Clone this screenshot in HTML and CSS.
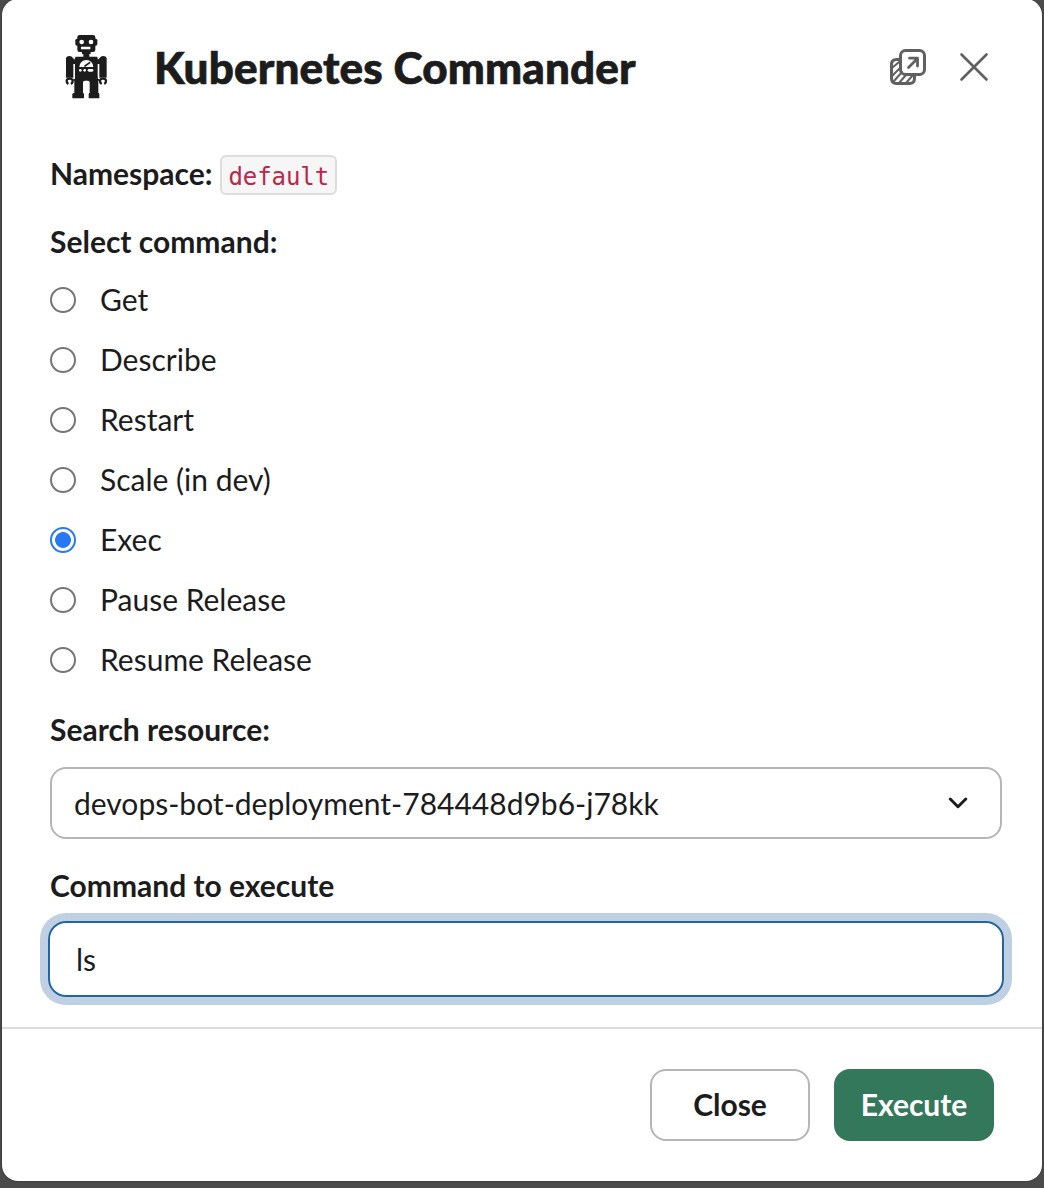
FILE: index.html
```html
<!DOCTYPE html>
<html lang="en">
<head>
<meta charset="utf-8">
<title>Kubernetes Commander</title>
<link rel="stylesheet" href="styles.css">
</head>
<body>
<main class="dialog" role="dialog" aria-labelledby="title">
  <header class="header">
    <svg class="robot" viewBox="0 18 216 216" aria-hidden="true">
      <g fill="#1d1c1d">
        <rect x="82" y="30" width="54" height="51" rx="7"/>
        <rect x="76" y="41" width="66" height="21" rx="5"/>
        <path d="M96 79h26v8h-4v9h-18v-9h-4z"/>
        <path d="M77 95h64l2 4v59q0 5-4 5H79q-4 0-4-5V99z"/>
        <path d="M48 99q2-6 10-6t11 6l3 4h5v14h-7v41H48zM170 99q-2-6-10-6t-11 6l-3 4h-5v14h7v41h22z"/>
        <path d="M75 155h68v7h5v5h-3v36l3 3v14h-32v-14l3-3v-30q0-6-5-6h-10q-5 0-5 6v30l3 3v14H67v-14l6-3v-36h-3v-5h5z"/>
      </g>
      <g fill="none" stroke="#1d1c1d" stroke-width="7">
        <path d="M55 177q-6-4-5-10 1-6 9-6t9 6q1 6-5 10M155 177q-6-4-5-10 1-6 9-6t9 6q1 6-5 10"/>
      </g>
      <g fill="#fff">
        <circle cx="95" cy="51" r="7"/><circle cx="123" cy="51" r="7"/>
        <path d="M93 65h28v8H93zM88 126a21 21 0 0 1 42 0z"/>
        <circle cx="91" cy="136" r="4"/><circle cx="104" cy="136" r="4"/>
        <rect x="113" y="132" width="17" height="8" rx="4"/>
      </g>
      <path d="M105 123l14-10" stroke="#1d1c1d" stroke-width="5" stroke-linecap="round"/>
    </svg>
    <h1 class="title" id="title">Kubernetes Commander</h1>
    <button class="icon-button" aria-label="Open in new window">
      <svg width="40" height="40" viewBox="0 0 40 40" fill="none" stroke="#616061" stroke-width="3" stroke-linecap="round" stroke-linejoin="round">
        <path d="M11.500 12.500H8.500Q3.500 12.500 3.500 17.500v14q0 5 5 5h13q5 0 5-5v-3"/>
        <path stroke-width="2" d="M4 21l7-6M4 29l8-8M6 34l8-9M11 36l7-8M18 36l7-8"/>
        <rect x="12.500" y="3.500" width="24" height="24" rx="5"/>
        <path stroke-width="2.800" d="M20.500 20.500 29 12M21.500 11.200H29.500V19"/>
      </svg>
    </button>
    <button class="icon-button" aria-label="Close dialog">
      <svg width="40" height="40" viewBox="0 0 40 40" fill="none" stroke="#616061" stroke-width="2.600" stroke-linecap="round"><path d="M7.500 7.500l25 25M32.500 7.500l-25 25"/></svg>
    </button>
  </header>
  <form class="body">
    <p class="namespace">Namespace: <code class="code">default</code></p>
    <p class="label label-command">Select command:</p>
    <div class="options">
      <label class="option"><span class="radio"></span><span class="option-text">Get</span></label>
      <label class="option"><span class="radio"></span><span class="option-text">Describe</span></label>
      <label class="option"><span class="radio"></span><span class="option-text">Restart</span></label>
      <label class="option"><span class="radio"></span><span class="option-text">Scale (in dev)</span></label>
      <label class="option"><span class="radio radio-on"></span><span class="option-text">Exec</span></label>
      <label class="option"><span class="radio"></span><span class="option-text">Pause Release</span></label>
      <label class="option"><span class="radio"></span><span class="option-text">Resume Release</span></label>
    </div>
    <p class="label label-resource">Search resource:</p>
    <div class="select">
      <span>devops-bot-deployment-784448d9b6-j78kk</span>
      <svg width="20" height="14" viewBox="0 0 20 14" fill="none" stroke="#1d1c1d" stroke-width="3" stroke-linecap="round" stroke-linejoin="round"><path d="M2.200 3l7.800 7.700L17.800 3"/></svg>
    </div>
    <p class="label label-execute">Command to execute</p>
    <div class="input">ls</div>
  </form>
  <footer class="footer">
    <button class="button">Close</button>
    <button class="button button-primary">Execute</button>
  </footer>
</main>
</body>
</html>
```
FILE: styles.css
```css
* { box-sizing: border-box; }
body {
  margin: 0;
  height: 1188px;
  overflow: hidden;
  background: #4b4b4b;
  color: #1d1c1d;
  font: 400 30px/44px Lato, "Liberation Sans", sans-serif;
}
.dialog {
  height: 1182px;
  margin: -1px 2px 0;
  display: flex;
  flex-direction: column;
  background: #fff;
  border-radius: 16px;
  box-shadow: 0 0 2px rgba(0, 0, 0, .5);
}
.header {
  height: 137px;
  flex: none;
  display: flex;
  align-items: center;
  padding: 0 48px 1px;
}
.robot { width: 72px; height: 72px; }
.title {
  flex: 1;
  margin: 0 0 0 32px;
  font-size: 44px;
  line-height: 60px;
  font-weight: 900;
  letter-spacing: .15px;
  -webkit-text-stroke: .7px #1d1c1d;
}
.icon-button {
  width: 40px;
  height: 40px;
  padding: 0;
  border: 0;
  background: none;
}
.icon-button + .icon-button { margin-left: 26px; }
.icon-button svg { display: block; }
.body {
  height: 891px;
  flex: none;
  padding: 15px 40px 0 48px;
}
.namespace, .label { margin: 0; font-weight: 700; height: 44px; }
.namespace { display: flex; align-items: center; gap: 8px; }
.code {
  height: 40px;
  margin-top: 4px;
  padding: 1px 6px 0;
  border: 2px solid #dddddd;
  border-radius: 6px;
  background: #f6f6f6;
  color: #b8274c;
  font: 400 24px/38px "DejaVu Sans Mono", monospace;
  letter-spacing: -.08px;
}
.label-command { margin-top: 24px; }
.options { margin-top: 7px; }
.option { height: 60px; display: flex; align-items: center; gap: 24px; }
.option-text { padding-bottom: 2px; }
.radio {
  width: 26px;
  height: 26px;
  border: 2px solid #767676;
  border-radius: 50%;
}
.radio-on { border-color: #2878f5; background: radial-gradient(circle, #2878f5 7.5px, #fff 8.3px); }
.label-resource { margin-top: 17px; }
.select {
  height: 72px;
  margin-top: 16px;
  display: flex;
  align-items: center;
  justify-content: space-between;
  padding: 0 32px 0 22px;
  border: 2px solid #b7b6b7;
  border-radius: 16px;
}
.label-execute { margin-top: 24px; }
.input {
  height: 76px;
  margin: 14px -2px 0;
  padding: 14px 26px;
  border: 2px solid #2465a0;
  border-radius: 18px;
  box-shadow: 0 0 0 8px #bfd0e3;
}
.footer {
  flex: 1;
  display: flex;
  justify-content: flex-end;
  gap: 24px;
  padding: 40px 48px;
  border-top: 2px solid #dddddd;
}
.button {
  width: 160px;
  height: 72px;
  padding: 0 0 2px;
  border: 2px solid #b7b6b7;
  border-radius: 16px;
  background: #fff;
  color: #1d1c1d;
  font: 700 30px/44px Lato, "Liberation Sans", sans-serif;
}
.button-primary { border-color: #34785c; background: #34785c; color: #fff; }
```
